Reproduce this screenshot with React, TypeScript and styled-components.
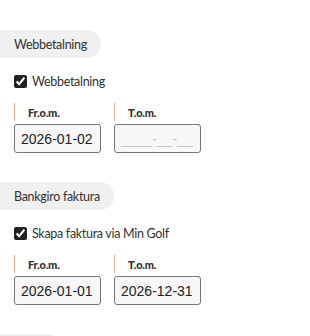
import React, { useState } from 'react';
import styled, { createGlobalStyle } from 'styled-components';

const GlobalStyle = createGlobalStyle`
  body {
    margin: 0;
    background: #ffffff;
    font-family: Lato, 'Open Sans', sans-serif;
    color: #333;
  }
`;

type PaymentSection = {
  title: string;
  checkLabel: string;
  from: string;
  to: string;
};

const sections: PaymentSection[] = [
  { title: 'Webbetalning', checkLabel: 'Webbetalning', from: '2026-01-02', to: '' },
  { title: 'Bankgiro faktura', checkLabel: 'Skapa faktura via Min Golf', from: '2026-01-01', to: '2026-12-31' },
];

const Section: React.FC<{ data: PaymentSection }> = ({ data }) => {
  const [checked, setChecked] = useState(true);
  const [from, setFrom] = useState(data.from);
  const [to, setTo] = useState(data.to);

  return (
    <SectionBox>
      <Pill>{data.title}</Pill>
      <CheckRow>
        <Checkbox type="checkbox" checked={checked} onChange={() => setChecked(!checked)} />
        <span>{data.checkLabel}</span>
      </CheckRow>
      <DateRow>
        <DateField>
          <FieldLabel>Fr.o.m.</FieldLabel>
          <DateInput value={from} placeholder="____-__-__" onChange={(e) => setFrom(e.target.value)} />
        </DateField>
        <DateField>
          <FieldLabel>T.o.m.</FieldLabel>
          <DateInput value={to} placeholder="____-__-__" onChange={(e) => setTo(e.target.value)} />
        </DateField>
      </DateRow>
    </SectionBox>
  );
};

const App: React.FC = () => {
  return (
    <Page>
      <GlobalStyle />
      {sections.map((s) => (
        <Section key={s.title} data={s} />
      ))}
      <Pill $minWidth={62}>&nbsp;</Pill>
    </Page>
  );
};

export default App;

const Page = styled.div`
  padding-top: 30px;
  height: 336px;
  box-sizing: border-box;
  overflow: hidden;
`;

const SectionBox = styled.div`
  display: flex;
  flex-direction: column;
  align-items: flex-start;
  margin-bottom: 29px;
`;

const Pill = styled.div<{ $minWidth?: number }>`
  display: inline-flex;
  align-items: center;
  height: 28px;
  min-width: ${(p) => (p.$minWidth ? `${p.$minWidth}px` : 'auto')};
  box-sizing: border-box;
  padding: 0 14px;
  background: #f0f0f0;
  border-radius: 0 14px 14px 0;
  font-size: 12.5px;
  letter-spacing: -0.3px;
  color: #333;
  margin-bottom: 16px;
`;

const CheckRow = styled.label`
  display: flex;
  align-items: center;
  gap: 5px;
  height: 15px;
  padding-left: 14px;
  font-size: 12.5px;
  letter-spacing: -0.3px;
  color: #333;
  margin-bottom: 14px;
`;

const Checkbox = styled.input`
  width: 13px;
  height: 13px;
  margin: 0;
  accent-color: #222;
`;

const DateRow = styled.div`
  display: flex;
  gap: 13px;
  padding-left: 14px;
`;

const DateField = styled.div`
  display: flex;
  flex-direction: column;
  gap: 3px;
`;

const FieldLabel = styled.div`
  height: 18px;
  display: flex;
  align-items: center;
  border-left: 1px solid #e8b48a;
  padding-left: 13px;
  font-size: 11px;
  font-weight: 900;
  letter-spacing: -0.2px;
  color: #333;
`;

const DateInput = styled.input`
  width: 87px;
  height: 29px;
  box-sizing: border-box;
  padding: 0 6px;
  border: 1px solid #767676;
  border-radius: 3px;
  background: #f7f7f7;
  font-family: 'Liberation Sans', Arial, sans-serif;
  font-size: 14px;
  color: #222;
  outline: none;

  &::placeholder {
    color: #c4c4c4;
  }
`;
